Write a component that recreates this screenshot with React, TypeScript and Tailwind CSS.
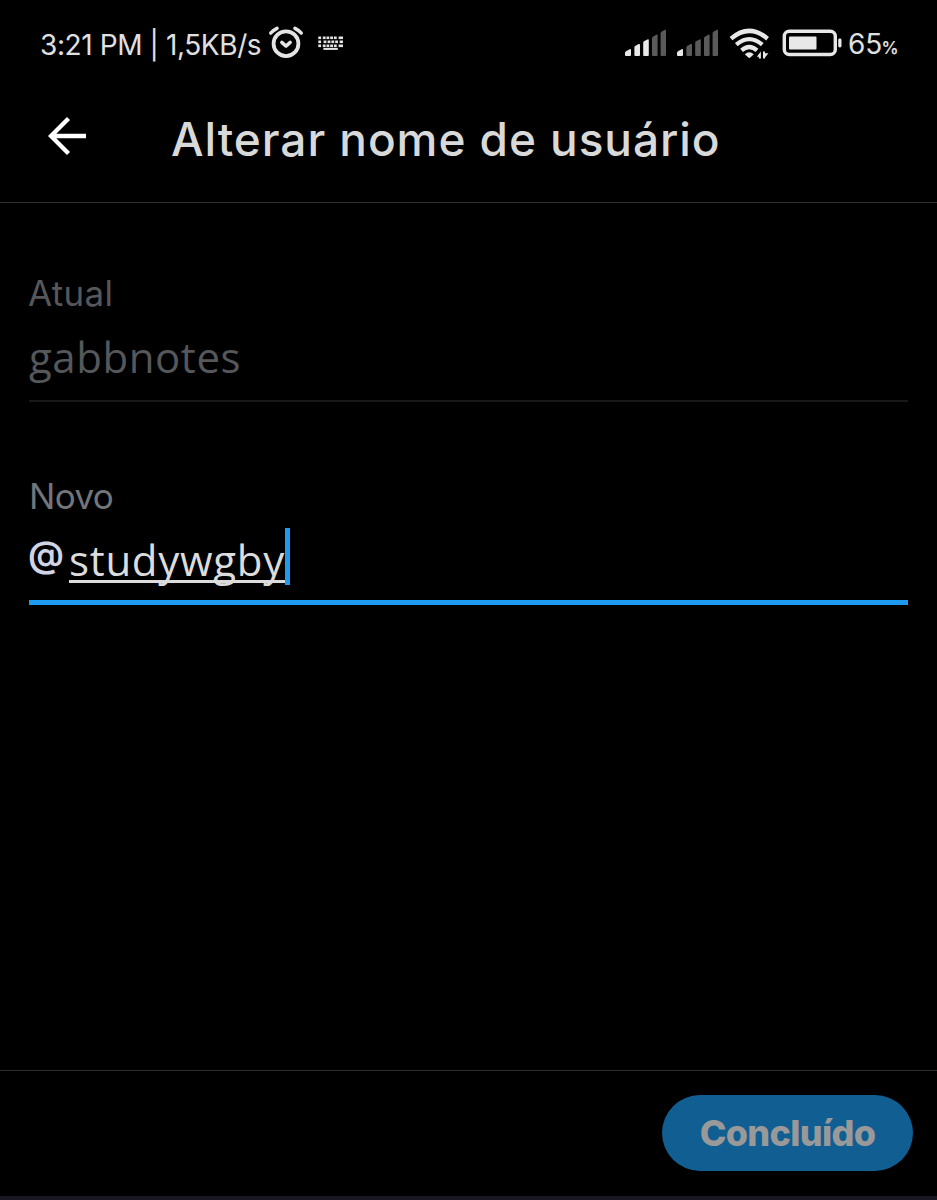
const KEY_ROWS = [
  { y: 36, keys: [318.3, 322.8, 326.5, 330.2, 333.9, 338.6], last: 4.4 },
  { y: 40, keys: [318.3, 323.6, 327.6, 331.4, 335.2, 339.6], last: 3.4 },
  { y: 44, keys: [318.3, 322.8, 326.5, 330.2, 333.9, 338.6], last: 4.4 },
];

const BARS = [
  "M0 55V53Q0 52 1 51.3L4.6 49.2Q6 48.6 6 50V55Q6 56 5 56H1Q0 56 0 55Z",
  "M9.4 55V47.6Q9.4 46.6 10.2 46L13.6 44.1Q15 43.6 15 45V55Q15 56 14 56H10.4Q9.4 56 9.4 55Z",
  "M18.2 55V43Q18.2 42 19 41.3L22.4 39.4Q23.8 38.8 23.8 40.2V55Q23.8 56 22.8 56H19.2Q18.2 56 18.2 55Z",
  "M27 55V38.3Q27 37.3 27.8 36.7L31.2 34.7Q32.6 34.2 32.6 35.6V55Q32.6 56 31.6 56H28Q27 56 27 55Z",
  "M35.6 55V33.3Q35.6 32.3 36.4 31.7L39.8 29.8Q41 29.3 41 30.6V55Q41 56 40 56H36.6Q35.6 56 35.6 55Z",
];

function AlarmIcon() {
  return (
    <svg className="w-[36px] h-[36px] shrink-0" viewBox="268 25 36 36" fill="none" stroke="#e4e4e4" strokeLinecap="round" strokeLinejoin="round">
      <circle cx="286" cy="43.7" r="12.4" strokeWidth="3.8" />
      <path d="M281.8 42.4L286 46.1L290.2 42.4" strokeWidth="3.4" />
      <path d="M270.8 33Q273 30.2 277 28.3M301.2 33Q299 30.2 295 28.3" strokeWidth="3.6" />
    </svg>
  );
}

function KeyboardIcon() {
  return (
    <svg className="w-[26px] h-[14px] shrink-0" viewBox="318 35.5 26 14" fill="#e4e4e4">
      {KEY_ROWS.map(r => r.keys.map((x, i) => (
        <rect key={`${r.y}-${x}`} x={x} y={r.y} width={i === 5 ? r.last : 2.8} height="2.6" />
      )))}
      <rect x="323.4" y="47.4" width="14.4" height="2" />
    </svg>
  );
}

function Signal({ active }: { active: number }) {
  return (
    <svg className="w-[41px] h-[28px] shrink-0" viewBox="0 29 41 28">
      {BARS.map((d, i) => <path key={d} d={d} fill={i < active ? "#e8e8e8" : "#5a5a5a"} />)}
    </svg>
  );
}

function WifiIcon() {
  return (
    <svg className="w-[40px] h-[31px] shrink-0" viewBox="729 27.5 40 31" fill="none" stroke="#e8e8e8">
      <path d="M731 38.2Q749.2 22.6 767.6 38.2" strokeWidth="4.4" />
      <path d="M736.3 44.2Q749.2 33 762.3 44.2" strokeWidth="4.2" />
      <path d="M741.6 49.8Q749.2 43.2 757 49.8" strokeWidth="4.2" />
      <path d="M744.8 53.8Q749.2 49.8 753.8 53.8L750.6 56.8Q749.3 58 748 56.8Z" fill="#e8e8e8" stroke="none" />
      <path d="M756.8 56.2L760.9 51V58H758.8V56.2ZM763 51H765V52.8H768.4L765 57V58H763Z" fill="#e8e8e8" stroke="none" />
    </svg>
  );
}

function BatteryIcon() {
  return (
    <svg className="w-[60px] h-[28px] shrink-0" viewBox="782 28.5 60 28">
      <rect x="784.3" y="30.8" width="51" height="23.2" rx="5" fill="none" stroke="#e8e8e8" strokeWidth="3.4" />
      <rect x="789" y="36" width="27.5" height="13" rx="1" fill="#e8e8e8" />
      <rect x="838.2" y="38" width="3.3" height="9" rx="1.4" fill="#e8e8e8" />
    </svg>
  );
}

export default function App() {
  return (
    <div className="flex h-[1200px] w-[937px] flex-col overflow-hidden bg-black font-['Inter',sans-serif]">
      <div className="flex h-[86px] shrink-0 items-center pl-[40px] text-[28px] leading-none text-[#e0e0e0]">
        <span className="w-[228px] whitespace-nowrap pt-[3px] tracking-[-0.4px]">3:21 PM | 1,5KB/s</span>
        <AlarmIcon />
        <div className="ml-[14px]"><KeyboardIcon /></div>
        <div className="ml-[281px] flex items-center">
          <Signal active={3} />
          <div className="ml-[11px]"><Signal active={1} /></div>
          <div className="ml-[11px]"><WifiIcon /></div>
          <div className="ml-[13px]"><BatteryIcon /></div>
        </div>
        <span className="ml-[6px] flex items-baseline whitespace-nowrap pt-[2px]">
          65<span className="-ml-px text-[17px] font-semibold tracking-[-1px]">%</span>
        </span>
      </div>

      <header className="flex h-[117px] shrink-0 items-start border-b border-[#2f3033] pl-[48px]">
        <svg className="mt-[30px] h-[40px] w-[39px] shrink-0" viewBox="48 116 39 40" fill="none" stroke="#fff" strokeWidth="4.4">
          <path d="M86 136H51M68.5 118.5L51 136L68.5 153.5" />
        </svg>
        <h1 className="ml-[84px] mt-[30px] whitespace-nowrap text-[46px] font-medium leading-[46px] tracking-[0.93px] text-[#d9d9d9]">Alterar nome de usuário</h1>
      </header>

      <main className="flex-1 px-[29px] pt-[73px]">
        <div className="h-[126px] border-b-2 border-[#16181a] text-[#55575a]">
          <p className="-ml-px text-[35px] leading-[35px] tracking-[0.3px]">Atual</p>
          <p className="mt-[21px] font-['Open_Sans',sans-serif] text-[42px] leading-[50px] tracking-[0.55px]">gabbnotes</p>
        </div>
        <div className="mt-[76px] flex h-[127px] flex-col border-b-[5px] border-[#1d9bf0]">
          <p className="text-[35px] leading-[36px] tracking-[-0.6px] text-[#72767a]">Novo</p>
          <div className="mt-[14px] flex h-[58px]">
            <span className="-ml-[1px] w-[41px] text-[36px] font-semibold leading-[52px] text-[#d0d4e4]">@</span>
            <span className="mt-[5px] h-[50px] border-b-[3px] border-[#dcdcdc] font-['Open_Sans',sans-serif] text-[42px] leading-[54px] tracking-[0.7px] text-[#dcdcdc]">studywgby</span>
            <span className="h-[57px] w-[5px] bg-[#1d9bf0]" />
          </div>
        </div>
      </main>

      <footer className="flex h-[130px] shrink-0 items-start justify-end border-b-4 border-[#181824] border-t border-t-[#2b2c30] pr-[24px] pt-[24px]">
        <button className="flex h-[76px] w-[251px] items-center justify-center rounded-full bg-[#115e92] text-[36px] font-extrabold leading-none tracking-[-0.7px] text-[#999]">Concluído</button>
      </footer>
    </div>
  );
}
